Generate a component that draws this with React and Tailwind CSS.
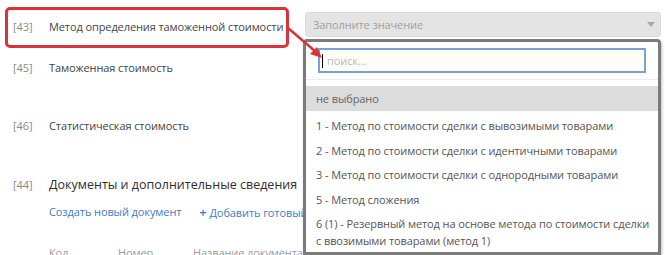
import React from "react";

const options = [
  "1 - Метод по стоимости сделки с вывозимыми товарами",
  "2 - Метод по стоимости сделки с идентичными товарами",
  "3 - Метод по стоимости сделки с однородными товарами",
  "5 - Метод сложения",
  "6 (1) - Резервный метод на основе метода по стоимости сделки с ввозимыми товарами (метод 1)",
];

function Row({ num, label, className = "" }) {
  return (
    <div className={`flex items-center ${className}`}>
      <span className="w-[36px] text-[#8a8a8a]">{num}</span>
      <span className="text-[#444]">{label}</span>
    </div>
  );
}

export default function App() {
  return (
    <div
      className="relative w-[665px] h-[255px] overflow-hidden bg-white text-[11px] leading-[16px] tracking-[-0.1px]"
      style={{ fontFamily: '"Open Sans", "Noto Sans", sans-serif' }}
    >
      {/* Row 43 with highlighted label + select */}
      <div className="flex items-start pt-[7px]">
        <div className="ml-[5px] w-[284px] h-[41px] border-[3px] border-[#d8343c] rounded-[5px] flex items-center pl-[5px] pb-[1px] whitespace-nowrap">
          <Row num="[43]" label="Метод определения таможенной стоимости" />
        </div>
        <div className="ml-[16px] mt-[5px] w-[356px] h-[25px] rounded-[3px] bg-[#e4e4e4] border border-[#dadada] flex items-center justify-between pl-[7px] pr-[5px]">
          <span className="text-[#a0a0a0]">Заполните значение</span>
          <span className="w-0 h-0 border-l-[4px] border-r-[4px] border-t-[5px] border-l-transparent border-r-transparent border-t-[#a8a8a8]" />
        </div>
      </div>

      <div className="flex flex-col pl-[13px] whitespace-nowrap">
        <Row num="[45]" label="Таможенная стоимость" className="mt-[12px] h-[16px]" />
        <Row num="[46]" label="Статистическая стоимость" className="mt-[42px] h-[16px]" />
        <div className="flex items-center mt-[41px] h-[20px]">
          <span className="w-[36px] text-[#8a8a8a]">[44]</span>
          <span className="text-[12.5px] tracking-normal text-[#2e2e2e]">Документы и дополнительные сведения</span>
        </div>
        <div className="flex items-center mt-[9px] pl-[36px] h-[16px] text-[#3d7cc9]">
          <span>Создать новый документ</span>
          <span className="ml-[18px]">
            <span className="text-[13px] font-semibold">+</span> Добавить готовый
          </span>
        </div>
        <div className="flex items-center mt-[25px] pl-[36px] h-[16px] text-[#9a9a9a]">
          <span className="w-[69px]">Код</span>
          <span className="w-[75px]">Номер</span>
          <span>Название документа</span>
        </div>
      </div>

      {/* Dropdown panel */}
      <div className="absolute left-[303px] top-[39px] w-[358px] h-[216px] bg-white border-[3px] border-[#7b7b7b] rounded-t-[4px] shadow-[1px_2px_3px_rgba(0,0,0,0.25)]">
        <div className="pt-[6px] px-[12px] pb-[6px] border-b border-[#ececec]">
          <div className="h-[25px] border-2 border-[#7aa3d4] bg-[#fffef6] flex items-center pl-[2px]">
            <span className="w-[1px] h-[14px] bg-black" />
            <span className="ml-[4px] text-[#b8b8b8]">поиск...</span>
          </div>
        </div>
        <div className="mt-[6px] h-[25px] bg-[#dcdcdc] flex items-center pl-[10px] text-[#666]">
          не выбрано
        </div>
        <div className="mt-[3px] text-[#555]">
          {options.map((o) => (
            <div key={o} className="py-[4px] pl-[10px] pr-[2px] leading-[16.5px]">
              {o}
            </div>
          ))}
        </div>
      </div>

      {/* Red pointer arrow */}
      <svg className="absolute left-[280px] top-[20px]" width="50" height="45" viewBox="0 0 50 45">
        <line x1="8" y1="8" x2="36" y2="32" stroke="#d8343c" strokeWidth="2.5" strokeLinecap="round" />
        <polygon points="42,38 30,34 37,27" fill="#d8343c" />
      </svg>
    </div>
  );
}
